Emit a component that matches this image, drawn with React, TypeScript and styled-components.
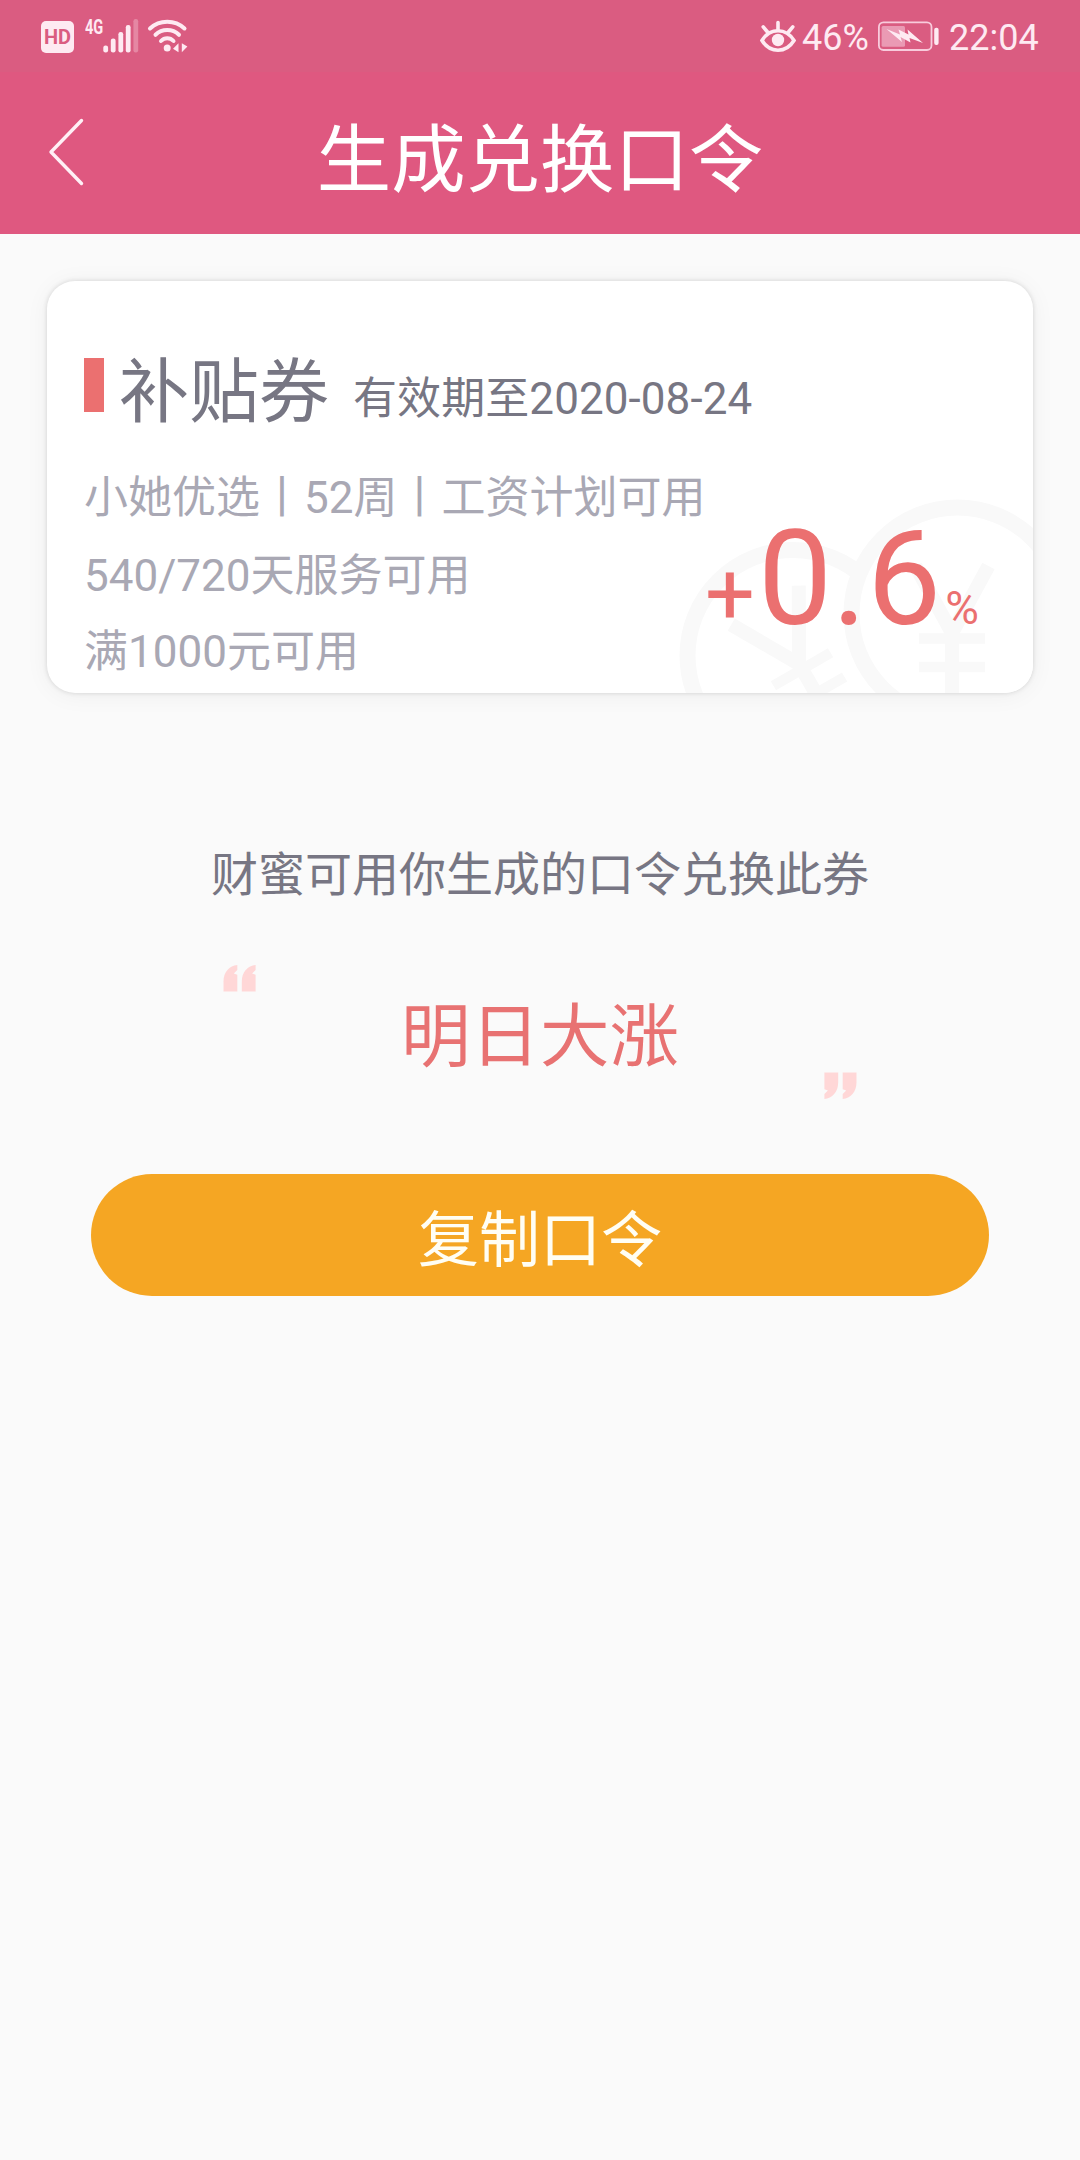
import React from 'react';
import styled, { createGlobalStyle } from 'styled-components';

const GlobalStyle = createGlobalStyle`
  * { box-sizing: border-box; }
  html, body { margin: 0; padding: 0; background: #fafafa; }
  body {
    font-family: Roboto, 'Noto Sans CJK SC', sans-serif;
    font-weight: 400;
    white-space: nowrap;
  }
`;

const Screen = styled.div`
  width: 1080px;
  height: 2160px;
  overflow: hidden;
  display: flex;
  flex-direction: column;
  align-items: center;
  background: #fafafa;
`;

const StatusBar = styled.header`
  width: 100%;
  height: 72px;
  padding: 0 42px 0 41px;
  display: flex;
  justify-content: space-between;
  align-items: flex-start;
  background: #da5c81;
  color: #feeaf2;
`;

const StatusGroup = styled.div<{ $top: number }>`
  display: flex;
  align-items: flex-start;
  padding-top: ${(p) => p.$top}px;
`;

const HdBadge = styled.span`
  width: 33px;
  height: 32px;
  margin-top: 2px;
  border-radius: 5px;
  background: #feeaf2;
  color: #da5c81;
  font-size: 20px;
  font-weight: 700;
  line-height: 32px;
  display: flex;
  justify-content: center;
`;

const NetworkLabel = styled.span`
  width: 18px;
  margin-left: 11px;
  font-size: 20.5px;
  font-weight: 700;
  line-height: 16px;
  span {
    display: inline-block;
    transform: scaleX(0.71);
    transform-origin: left;
  }
`;

const StatusText = styled.span<{ $width: number; $left: number }>`
  width: ${(p) => p.$width}px;
  margin-left: ${(p) => p.$left}px;
  font-size: 36px;
  line-height: 36px;
`;

const Glyph = styled.svg<{ $left?: number; $top?: number }>`
  display: block;
  flex: none;
  margin-left: ${(p) => p.$left ?? 0}px;
  margin-top: ${(p) => p.$top ?? 0}px;
`;

const TitleBar = styled.div`
  width: 100%;
  height: 162px;
  flex: none;
  display: grid;
  grid-template-columns: 140px 1fr 140px;
  align-items: center;
  background: #df5880;
`;

const BackButton = styled.button`
  height: 100%;
  padding: 0 0 2px 48px;
  border: 0;
  background: none;
  display: flex;
  align-items: center;
`;

const Title = styled.h1`
  margin: 0;
  padding-top: 15px;
  color: #fff;
  font-size: 74.4px;
  font-weight: 400;
  line-height: 90px;
  text-align: center;
`;

const Card = styled.section`
  position: relative;
  width: 986px;
  height: 412px;
  flex: none;
  margin-top: 47px;
  padding: 66px 55px 0 37px;
  border-radius: 28px;
  background: #fff;
  box-shadow: 0 0 5px rgba(0, 0, 0, 0.14), 0 2px 24px rgba(0, 0, 0, 0.05);
  overflow: hidden;
`;

const Watermark = styled.svg`
  position: absolute;
  right: 0;
  bottom: 0;
`;

const CardHead = styled.div`
  position: relative;
  display: flex;
  align-items: flex-start;
`;

const Marker = styled.i`
  width: 20px;
  height: 54px;
  margin-top: 11px;
  background: #eb7070;
`;

const CouponName = styled.h2`
  margin: 1px 0 0 15px;
  color: #777683;
  font-size: 70px;
  font-weight: 400;
  line-height: 90px;
`;

const Expiry = styled.span`
  margin: 22px 0 0 24px;
  color: #777683;
  font-size: 44px;
  letter-spacing: 0.08px;
  line-height: 60px;
`;

const CardBody = styled.div`
  position: relative;
  display: flex;
  justify-content: space-between;
  margin-top: 30px;
`;

const Rules = styled.ul`
  width: 621px;
  margin: 0;
  padding: 0;
  list-style: none;
  color: #a9a8b4;
  font-size: 44px;
  line-height: 60px;
`;

const Rule = styled.li<{ $gap: number }>`
  margin-bottom: ${(p) => p.$gap}px;
`;

const Rate = styled.div`
  flex: 1;
  padding-top: 45px;
  display: flex;
  align-items: baseline;
  line-height: 132px;
  color: #eb7070;
`;

const RatePart = styled.span<{ $size: number; $left?: number }>`
  font-size: ${(p) => p.$size}px;
  margin-left: ${(p) => p.$left ?? 0}px;
`;

const Hint = styled.p`
  margin: 147px 0 0;
  color: #777683;
  font-size: 47px;
  line-height: 70px;
`;

const Passphrase = styled.div`
  width: 634px;
  height: 134px;
  margin-top: 55px;
  display: flex;
  justify-content: space-between;
`;

const Word = styled.strong`
  padding-top: 28px;
  color: #e87272;
  font-size: 69.5px;
  font-weight: 400;
  line-height: 90px;
`;

const CloseQuote = styled.svg`
  display: block;
  align-self: flex-end;
`;

const CopyButton = styled.button`
  width: 898px;
  height: 122px;
  flex: none;
  margin-top: 75px;
  padding: 11px 0 0;
  border: 0;
  border-radius: 61px;
  background: #f5a623;
  color: #fffef4;
  font: 400 61px/90px Roboto, 'Noto Sans CJK SC', sans-serif;
`;

const SignalIcon = () => (
  <Glyph width="36" height="34" viewBox="0 0 36 34" fill="#feeaf2">
    <rect x="0.3" y="26.5" width="4.8" height="7" rx="2.2" />
    <rect x="7.8" y="19.5" width="4.8" height="14" rx="2.2" />
    <rect x="15.4" y="13" width="4.8" height="20.5" rx="2.2" />
    <rect x="22.8" y="6" width="4.8" height="27.5" rx="2.2" />
    <rect x="30.4" y="0" width="4.8" height="33.5" rx="2.2" opacity="0.3" />
  </Glyph>
);

const WifiIcon = () => (
  <Glyph $left={8} width="42" height="34" viewBox="0 0 42 34" fill="none" stroke="#feeaf2" strokeWidth="4" strokeLinecap="round">
    <path d="M3 9.5C12.5 0.5 28 0.5 37.5 9.5" />
    <path d="M8.5 15.8C15 9.5 25.5 9.5 32 15.8" />
    <path d="M14 22C17.5 18.3 23 18.3 26.5 22" />
    <circle cx="20.2" cy="29" r="3.5" fill="#feeaf2" stroke="none" />
    <path d="M31.5 24.2V33.2L26 29.8Z" fill="#feeaf2" stroke="none" />
    <path d="M34.8 24.2L40.4 27.6L34.8 33.2Z" fill="#feeaf2" stroke="none" />
  </Glyph>
);

const EyeIcon = () => (
  <Glyph width="36" height="34" viewBox="0 0 36 34" fill="none" stroke="#feeaf2" strokeWidth="3.6" strokeLinecap="round">
    <path d="M2 20.5C10 7.5 26 7.5 34 20.5C26 33.5 10 33.5 2 20.5Z" />
    <circle cx="18" cy="20" r="6.2" fill="#feeaf2" stroke="none" />
    <path d="M18 2.5V10M3.2 6.8L7.5 12M32.8 6.8L28.5 12" />
  </Glyph>
);

const BatteryIcon = () => (
  <Glyph $left={10} $top={1} width="62" height="30" viewBox="0 0 62 30">
    <rect x="0.9" y="1.4" width="52.6" height="27.6" rx="4.5" fill="none" stroke="#f8cbdc" strokeWidth="1.8" />
    <rect x="3.6" y="5" width="23.4" height="20.8" rx="1.5" fill="#ea9ab4" />
    <path d="M8.5 8L22 13.5L20.5 8.5L30.5 13.5L29.5 8.5L45 22L31.5 17L32.5 21.5L22.5 16L24 21Z" fill="#feeaf2" />
    <rect x="56.2" y="6.8" width="4.4" height="17.2" rx="2" fill="#feeaf2" />
  </Glyph>
);

const QuoteShape = () => (
  <>
    <path d="M14.3 0C6.5 1 0.5 6.5 0.5 17V26.5H14.3V9.8L10.8 8.5L14.3 5Z" />
    <path d="M32.6 0C24.8 1 18.8 6.5 18.8 17V26.5H32.6V9.8L29.1 8.5L32.6 5Z" />
  </>
);

const CoinWatermark = () => (
  <Watermark width="360" height="200" viewBox="673 493 360 200" stroke="#f9f9f9" fill="none">
    <circle cx="793" cy="655.5" r="105.5" strokeWidth="16" />
    <g transform="translate(799 664) rotate(-30)">
      <path d="M-39 -68L0 0L39 -68M0 0V70" strokeWidth="14" />
      <path d="M-33 6H33M-33 34H33" strokeWidth="10.5" />
    </g>
    <circle cx="957.5" cy="613.5" r="106" strokeWidth="16" fill="#fff" />
    <g transform="translate(952 633)">
      <path d="M-36.5 -67L0 0L36.5 -67M0 0V70" strokeWidth="14" />
      <path d="M-33 5.5H33M-33 34H33" strokeWidth="10.5" />
    </g>
  </Watermark>
);

export default function App() {
  return (
    <Screen>
      <GlobalStyle />
      <StatusBar>
        <StatusGroup $top={19}>
          <HdBadge>HD</HdBadge>
          <NetworkLabel><span>4G</span></NetworkLabel>
          <SignalIcon />
          <WifiIcon />
        </StatusGroup>
        <StatusGroup $top={20}>
          <EyeIcon />
          <StatusText $width={66} $left={6}>46%</StatusText>
          <BatteryIcon />
          <StatusText $width={89} $left={9}>22:04</StatusText>
        </StatusGroup>
      </StatusBar>
      <TitleBar>
        <BackButton aria-label="返回">
          <svg width="36" height="68" viewBox="0 0 36 68" fill="none" stroke="#fff0f6" strokeWidth="3.4" strokeLinecap="round" strokeLinejoin="round">
            <path d="M33.5 2.5L3 34L33.5 65.5" />
          </svg>
        </BackButton>
        <Title>生成兑换口令</Title>
      </TitleBar>

      <Card>
        <CoinWatermark />
        <CardHead>
          <Marker />
          <CouponName>补贴券</CouponName>
          <Expiry>有效期至2020-08-24</Expiry>
        </CardHead>
        <CardBody>
          <Rules>
            <Rule $gap={18}>小她优选丨52周丨工资计划可用</Rule>
            <Rule $gap={16}>540/720天服务可用</Rule>
            <Rule $gap={0}>满1000元可用</Rule>
          </Rules>
          <Rate>
            <RatePart $size={88}>+</RatePart>
            <RatePart $size={132} $left={3}>0.6</RatePart>
            <RatePart $size={46} $left={4}>%</RatePart>
          </Rate>
        </CardBody>
      </Card>

      <Hint>财蜜可用你生成的口令兑换此券</Hint>
      <Passphrase>
        <svg width="33" height="27" viewBox="0 0 33 27" fill="#ffd7d7"><QuoteShape /></svg>
        <Word>明日大涨</Word>
        <CloseQuote width="33" height="27" viewBox="0 0 33 27" fill="#ffd7d7">
          <g transform="rotate(180 16.5 13.5)"><QuoteShape /></g>
        </CloseQuote>
      </Passphrase>
      <CopyButton>复制口令</CopyButton>
    </Screen>
  );
}
